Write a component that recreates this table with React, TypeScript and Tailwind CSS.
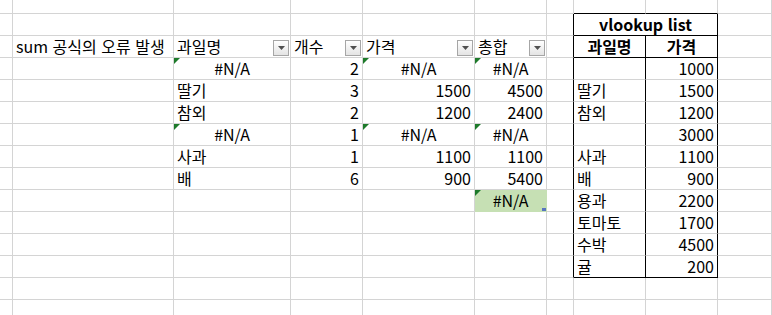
import React from 'react';

type Cell = {
  v?: string;
  a?: 'l' | 'r' | 'c';
  bold?: boolean;
  err?: boolean;
  filter?: boolean;
  fill?: boolean;
  rb?: boolean;
  bb?: boolean;
  span?: number;
};

// columns B..F of the fruit table, by sheet row
const fruitRows: Record<number, Cell[]> = {
  2: [
    { v: 'sum 공식의 오류 발생' },
    { v: '과일명', filter: true },
    { v: '개수', filter: true },
    { v: '가격', filter: true },
    { v: '총합', filter: true },
  ],
  3: [{}, { v: '#N/A', a: 'c', err: true }, { v: '2', a: 'r' }, { v: '#N/A', a: 'c', err: true }, { v: '#N/A', a: 'c', err: true }],
  4: [{}, { v: '딸기' }, { v: '3', a: 'r' }, { v: '1500', a: 'r' }, { v: '4500', a: 'r' }],
  5: [{}, { v: '참외' }, { v: '2', a: 'r' }, { v: '1200', a: 'r' }, { v: '2400', a: 'r' }],
  6: [{}, { v: '#N/A', a: 'c', err: true }, { v: '1', a: 'r' }, { v: '#N/A', a: 'c', err: true }, { v: '#N/A', a: 'c', err: true }],
  7: [{}, { v: '사과' }, { v: '1', a: 'r' }, { v: '1100', a: 'r' }, { v: '1100', a: 'r' }],
  8: [{}, { v: '배' }, { v: '6', a: 'r' }, { v: '900', a: 'r' }, { v: '5400', a: 'r' }],
  9: [{}, {}, {}, {}, { v: '#N/A', a: 'c', err: true, fill: true }],
};

const lookup = [
  ['', '1000'],
  ['딸기', '1500'],
  ['참외', '1200'],
  ['', '3000'],
  ['사과', '1100'],
  ['배', '900'],
  ['용과', '2200'],
  ['토마토', '1700'],
  ['수박', '4500'],
  ['귤', '200'],
];

function buildRow(r: number): Cell[] {
  const left = fruitRows[r] ?? [{}, {}, {}, {}, {}];
  const inTable = r >= 1 && r <= 12;
  const g: Cell = { rb: inTable };
  let right: Cell[];
  if (r === 0) {
    right = [{ bb: true }, { bb: true }];
  } else if (r === 1) {
    right = [{ v: 'vlookup list', a: 'c', bold: true, rb: true, bb: true, span: 2 }];
  } else if (r === 2) {
    right = [
      { v: '과일명', a: 'c', bold: true, rb: true, bb: true },
      { v: '가격', a: 'c', bold: true, rb: true, bb: true },
    ];
  } else if (r <= 12) {
    const [name, price] = lookup[r - 3];
    right = [
      { v: name, rb: true, bb: r === 12 },
      { v: price, a: 'r', rb: true, bb: r === 12 },
    ];
  } else {
    right = [{}, {}];
  }
  return [{}, ...left, g, ...right, {}];
}

function ErrorMark() {
  return (
    <svg className="absolute top-0 left-0" width="6" height="6" viewBox="0 0 6 6">
      <polygon points="0,0 6,0 0,6" fill="#1d7a2a" />
    </svg>
  );
}

function FilterButton() {
  return (
    <span className="ml-auto mb-[1px] self-end flex h-4 w-4 shrink-0 items-center justify-center border border-[#a6a6a6] bg-gradient-to-b from-white to-[#e4e4e4]">
      <svg width="7" height="4" viewBox="0 0 7 4">
        <polygon points="0,0 7,0 3.5,4" fill="#505050" />
      </svg>
    </span>
  );
}

function SheetCell({ cell }: { cell: Cell }) {
  const align = cell.a === 'r' ? 'justify-end' : cell.a === 'c' ? 'justify-center' : 'justify-start';
  const rightEdge = cell.rb ? 'border-r-black' : cell.fill ? 'border-r-[#c6e0b4]' : 'border-r-[#d4d4d4]';
  const bottomEdge = cell.bb ? 'border-b-black' : cell.fill ? 'border-b-[#c6e0b4]' : 'border-b-[#d4d4d4]';
  return (
    <div
      className={`relative flex items-center whitespace-nowrap border-r border-b ${rightEdge} ${bottomEdge} ${align} ${
        cell.filter ? 'pl-[3px] pr-[1px]' : 'px-[3px]'
      } ${cell.fill ? 'bg-[#c6e0b4]' : ''} ${cell.bold ? 'font-bold' : ''} ${cell.span === 2 ? 'col-span-2' : ''}`}
    >
      {cell.err && <ErrorMark />}
      {cell.v && <span className="[word-spacing:1px]">{cell.v}</span>}
      {cell.filter && <FilterButton />}
      {cell.fill && <span className="absolute right-0 bottom-0 h-[3px] w-[4px] bg-[#5875c0]" />}
    </div>
  );
}

export default function App() {
  const rows = Array.from({ length: 15 }, (_, r) => buildRow(r));
  return (
    <div className="h-[315px] w-[772px] overflow-hidden bg-white">
      <div className="grid grid-cols-[13px_161px_117px_72px_112px_72px_27px_72px_72px_54px] grid-rows-[14px_repeat(14,22px)] font-['Noto_Sans_CJK_KR',sans-serif] text-[16px] leading-[21px] text-black">
        {rows.map((row, r) => row.map((cell, c) => <SheetCell key={`${r}-${c}`} cell={cell} />))}
      </div>
    </div>
  );
}
